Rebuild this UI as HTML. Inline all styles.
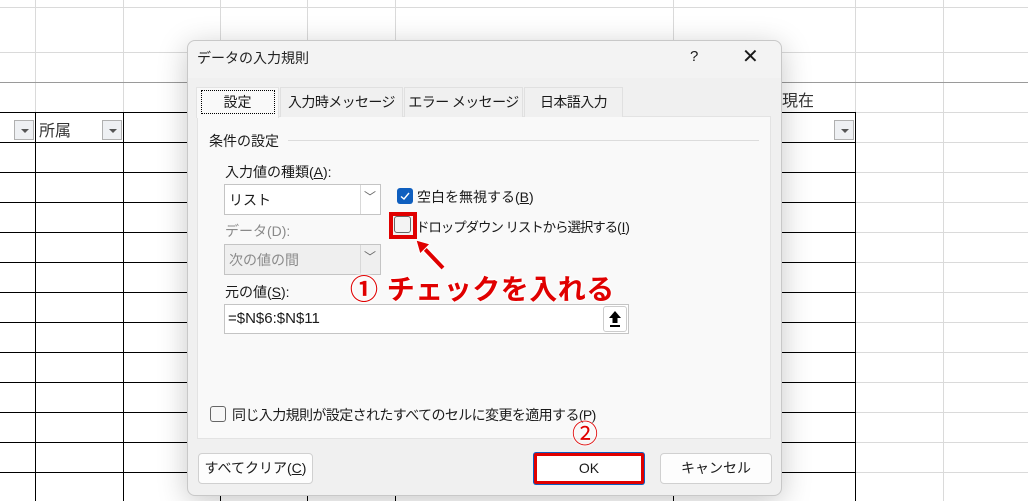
<!DOCTYPE html>
<html><head><meta charset="utf-8"><style>
*{margin:0;padding:0;box-sizing:border-box}
body{width:1028px;height:501px;overflow:hidden;background:#fff;position:relative;font-family:"Liberation Sans","Noto Sans CJK JP",sans-serif;font-size:14px;color:#1a1a1a}
.a{position:absolute}
.vl{position:absolute;top:0;width:1px;height:501px;background:#dadada}
.hl{position:absolute;left:0;height:1px;width:1028px;background:#dadada}
.bv{position:absolute;width:1px;background:#000}
.bh{position:absolute;height:1px;background:#000}
.dd{position:absolute;width:20px;height:20px;border:1px solid #b0b0b0;background:#eef0f3}
.dd:after{content:"";position:absolute;left:6px;top:8px;border:4px solid transparent;border-top:4px solid #555;border-bottom:0}
.txt{position:absolute;white-space:nowrap}
.tab{position:absolute;top:87px;height:30px;border:1px solid #e0e0e0;border-bottom:none;background:#f0f0f0;text-align:center;line-height:29px;font-size:14px;letter-spacing:-0.6px}
.btn{position:absolute;top:453px;height:31px;border:1px solid #d0d0d0;border-radius:4px;background:#fdfdfd;text-align:center;line-height:29px;font-size:14px}
</style></head><body>
<div class="vl" style="left:35px"></div><div class="vl" style="left:123px"></div><div class="vl" style="left:220px"></div><div class="vl" style="left:307px"></div><div class="vl" style="left:395px"></div><div class="vl" style="left:673px"></div><div class="vl" style="left:855px"></div><div class="vl" style="left:943px"></div>
<div class="hl" style="top:7px"></div><div class="hl" style="top:52px"></div><div class="hl" style="top:82px;background:#9a9a9a"></div>
<div class="hl" style="top:112px"></div><div class="hl" style="top:142px"></div><div class="hl" style="top:172px"></div><div class="hl" style="top:202px"></div><div class="hl" style="top:232px"></div><div class="hl" style="top:262px"></div><div class="hl" style="top:292px"></div><div class="hl" style="top:322px"></div><div class="hl" style="top:352px"></div><div class="hl" style="top:382px"></div><div class="hl" style="top:412px"></div><div class="hl" style="top:442px"></div><div class="hl" style="top:472px"></div>
<div class="bh" style="left:0;width:856px;top:112px"></div>
<div class="bh" style="left:0;width:856px;top:142px"></div><div class="bh" style="left:0;width:856px;top:172px"></div><div class="bh" style="left:0;width:856px;top:202px"></div><div class="bh" style="left:0;width:856px;top:232px"></div><div class="bh" style="left:0;width:856px;top:262px"></div><div class="bh" style="left:0;width:856px;top:292px"></div><div class="bh" style="left:0;width:856px;top:322px"></div><div class="bh" style="left:0;width:856px;top:352px"></div><div class="bh" style="left:0;width:856px;top:382px"></div><div class="bh" style="left:0;width:856px;top:412px"></div><div class="bh" style="left:0;width:856px;top:442px"></div><div class="bh" style="left:0;width:856px;top:472px"></div>
<div class="bv" style="left:35px;top:112px;height:389px"></div><div class="bv" style="left:123px;top:112px;height:389px"></div><div class="bv" style="left:220px;top:112px;height:389px"></div><div class="bv" style="left:307px;top:112px;height:389px"></div><div class="bv" style="left:395px;top:112px;height:389px"></div><div class="bv" style="left:673px;top:112px;height:389px"></div><div class="bv" style="left:855px;top:112px;height:389px"></div>
<div class="dd" style="left:14px;top:120px"></div><div class="dd" style="left:102px;top:120px"></div><div class="dd" style="left:834px;top:120px"></div>
<div class="txt" style="left:39px;top:117px;font-size:16px;color:#333">所属</div>
<div class="txt" style="left:782px;top:87px;font-size:16px;color:#333">現在</div>
<div class="a" style="left:187px;top:40px;width:595px;height:456px;background:#f0f0f0;border:1px solid #c8c8c8;border-radius:8px;box-shadow:0 6px 30px rgba(0,0,0,.22)">
<div class="a" style="left:0;top:0;width:593px;height:37px;background:#f3f3f3;border-radius:8px 8px 0 0"></div>
</div>
<div class="txt" style="left:197px;top:48px;font-size:14px;color:#222">データの入力規則</div>
<div class="txt" style="left:690px;top:48px;font-size:15px">?</div>
<div class="txt" style="left:742px;top:44px;font-size:20px;font-weight:300">✕</div>
<div class="a" style="left:197px;top:116px;width:574px;height:323px;background:#f9f9f9;border:1px solid #e3e3e3"></div>
<div class="tab" style="left:196px;width:83px;background:#f9f9f9;height:31px;border-color:#e3e3e3;letter-spacing:0"><span style="display:inline-block;border:1px dotted #000;width:74px;height:24px;line-height:22px;margin-top:2px">設定</span></div>
<div class="tab" style="left:280px;width:123px">入力時メッセージ</div>
<div class="tab" style="left:404px;width:119px">エラー メッセージ</div>
<div class="tab" style="left:524px;width:99px">日本語入力</div>
<div class="txt" style="left:209px;top:131px">条件の設定</div>
<div class="a" style="left:288px;top:140px;width:471px;height:1px;background:#dcdcdc"></div>
<div class="txt" style="left:225px;top:162px">入力値の種類(<u>A</u>):</div>
<div class="a" style="left:224px;top:184px;width:157px;height:31px;background:#fff;border:1px solid #c4c4c4"></div>
<div class="a" style="left:360px;top:185px;width:1px;height:29px;background:#d8d8d8"></div>
<div class="txt" style="left:229px;top:190px">リスト</div>
<div class="txt" style="left:364px;top:188px;color:#666;font-size:12px">﹀</div>
<div class="txt" style="left:225px;top:221px;color:#8a8a8a">データ(D):</div>
<div class="a" style="left:224px;top:244px;width:157px;height:31px;background:#efefef;border:1px solid #c4c4c4"></div>
<div class="a" style="left:360px;top:245px;width:1px;height:29px;background:#d8d8d8"></div>
<div class="txt" style="left:229px;top:250px;color:#8a8a8a">次の値の間</div>
<div class="txt" style="left:364px;top:248px;color:#666;font-size:12px">﹀</div>
<div class="txt" style="left:225px;top:282px">元の値(<u>S</u>):</div>
<div class="a" style="left:224px;top:304px;width:405px;height:30px;background:#fff;border:1px solid #c4c4c4"></div>
<div class="txt" style="left:228px;top:310px;font-size:15px">=$N$6:$N$11</div>
<div class="a" style="left:603px;top:306px;width:24px;height:26px;border:1px solid #ccc;border-radius:3px;background:#fff"></div>
<svg class="a" style="left:607px;top:310px" width="16" height="18"><path d="M8 1 L14 8 H10.5 V13 H5.5 V8 H2 Z" fill="#000"/><rect x="3" y="15" width="10" height="2" fill="#000"/></svg>
<div class="a" style="left:397px;top:188px;width:16px;height:16px;background:#0f5fbf;border-radius:3px"></div>
<svg class="a" style="left:397px;top:188px" width="16" height="16"><path d="M4 8.5 L7 11 L12 5" stroke="#fff" stroke-width="1.4" fill="none"/></svg>
<div class="txt" style="left:417px;top:187px">空白を無視する(<u>B</u>)</div>
<div class="a" style="left:389px;top:212px;width:28px;height:27px;border:4px solid #e00000;background:#f2f2f2"></div>
<div class="a" style="left:394px;top:216px;width:17px;height:17px;border:1px solid #666;border-radius:3px;background:#f3f3f3"></div>
<div class="txt" style="left:416px;top:216px;font-size:13.5px;letter-spacing:-1.1px">ドロップダウン リストから選択する<span style="letter-spacing:0">(<u>I</u>)</span></div>
<div class="a" style="left:210px;top:406px;width:16px;height:16px;border:1px solid #666;border-radius:3px;background:#f7f7f7"></div>
<div class="txt" style="left:232px;top:405px;letter-spacing:-0.6px">同じ入力規則が設定されたすべてのセルに変更を適用する(P)</div>
<svg class="a" style="left:410px;top:236px" width="40" height="36"><path d="M33 32 L12 10" stroke="#fff" stroke-width="7"/><path d="M33 32 L12 10" stroke="#e00000" stroke-width="4"/><path d="M6 4 L20 8 L10 18 Z" fill="#e00000" stroke="#fff" stroke-width="1"/></svg>
<div class="txt" style="left:350px;top:268px;font-size:28px;font-weight:bold;color:#e00000;letter-spacing:0.5px;text-shadow:0 0 3px #fff,0 0 3px #fff,1px 1px 2px #fff,-1px -1px 2px #fff">① チェックを入れる</div>
<div class="btn" style="left:198px;width:115px">すべてクリア(<u>C</u>)</div>
<div class="btn" style="left:534px;width:110px;border:3px solid #e00000;border-radius:2px;background:#fff;line-height:25px;box-shadow:0 0 0 1px #0f5fbf">OK</div>
<div class="btn" style="left:660px;width:112px">キャンセル</div>
<div class="txt" style="left:572px;top:414px;font-size:26px;color:#e00000;text-shadow:0 0 3px #fff,0 0 3px #fff,0 0 3px #fff">②</div>
</body></html>
